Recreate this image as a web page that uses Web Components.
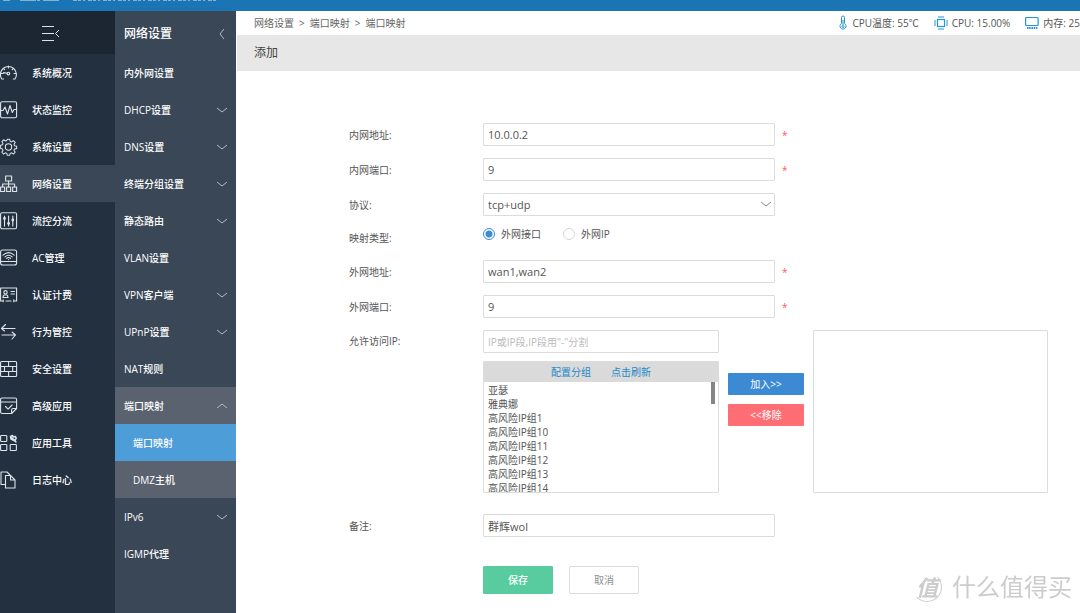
<!DOCTYPE html>
<html lang="zh-CN">
<head>
<meta charset="utf-8">
<title>端口映射</title>
<style>
html, body { margin: 0; }
body {
  font-family: "Open Sans", "Noto Sans CJK SC", sans-serif;
  font-size: 10px; line-height: 14px; color: #555; background: #fff;
  overflow-x: hidden;
}
</style>
</head>
<body>
<router-app></router-app>
<script>
const base = `
  *, *::before, *::after { box-sizing: border-box; }
  a { color: inherit; text-decoration: none; }
  button, input, select { font: inherit; color: inherit; margin: 0; }
  svg { display: block; flex: none; }
`;
function define(name, css, html) {
  customElements.define(name, class extends HTMLElement {
    connectedCallback() {
      if (this.shadowRoot) return;
      const root = this.attachShadow({ mode: "open" });
      const t = document.createElement("template");
      t.innerHTML = `<style>${base}${css}</style>` + (typeof html === "function" ? html(this) : html);
      root.append(t.content.cloneNode(true));
    }
  });
}

const stroke = (body, w = 18) => `<svg width="${w}" height="${w}" viewBox="0 0 ${w} ${w}" fill="none" stroke="currentColor" stroke-width="1.1" stroke-linecap="round" stroke-linejoin="round" aria-hidden="true">${body}</svg>`;
const icons = {
  gauge: `<path d="M3.500 15H1.800A8 8 0 1 1 15 15H13.300M8.400 2V4M3.300 4.300l1.300 1.300M13.500 4.300l-1.300 1.300M1 9.500h2M14 9.500h2M3.500 8.600L7 9.300"/><circle cx="8.400" cy="9.600" r="1.300"/>`,
  pulse: `<rect x=".6" y=".8" width="16" height="16" rx="1.5"/><path d="M.6 9.500H3L5 6l2.500 7L10 4.500l2.300 7L14 8.500h2.600"/>`,
  gear: `<circle cx="8.5" cy="9" r="3.2"/><path d="M7.2 1h2.6l.5 2.3 1.5.6 2-1.3 1.9 1.9-1.3 2 .6 1.5 2.3.5v2.6l-2.3.4-.6 1.5 1.3 2-1.9 1.9-2-1.3-1.5.6-.5 2H7.2l-.5-2-1.5-.6-2 1.3-1.9-1.9 1.3-2-.6-1.5-2-.4V7.500l2-.5.6-1.5-1.3-2 1.9-1.9 2 1.3 1.5-.6z" transform="translate(.6 .3) scale(.93)"/>`,
  net: `<rect x="5.6" y="1" width="6" height="5"/><rect x=".6" y="12" width="4" height="4.5"/><rect x="6.6" y="12" width="4" height="4.5"/><rect x="12.6" y="12" width="4" height="4.5"/><path d="M8.6 6v6M2.6 12V9h12v3"/>`,
  sliders: `<rect x=".6" y=".8" width="16" height="16" rx="1.5"/><path d="M4.5 4v10M8.6 4v10M12.8 4v10"/><g fill="currentColor" stroke="none"><circle cx="4.5" cy="6.5" r="1.4"/><circle cx="8.6" cy="11.5" r="1.4"/><circle cx="12.8" cy="8" r="1.4"/></g>`,
  wifi: `<rect x=".6" y="1" width="16" height="15" rx="2"/><path d="M.8 12.5h15.6M3 6.2Q8.6 1 14.2 6.2M5 7.8Q8.6 4.8 12.2 7.8M6.7 9.3q1.9-1.5 3.8 0M8.6 10.5v.1"/>`,
  card: `<path d="M3 15H.6V2h16v13H14M6 15h5M3.2 13.8v2M13.8 13.8v2M11 5.5h3.5M11 8h3.5M3 11.5q0-2.8 2.5-2.8T8 11.5z"/><circle cx="5.5" cy="6.3" r="1.7"/>`,
  arrows: `<path d="M15 5.5H1.5L5.500 1.5M1.5 5.500l3 2.500M2 12h13.500l-3.500-3M15.500 12l-3.500 4"/>`,
  wall: `<rect x=".6" y="1.5" width="16" height="15" rx="1"/><path d="M.6 6.500h16M.6 11.500h16M8.600 1.500v5M4.500 6.500v5M12.700 6.500v5M8.600 11.500v5"/>`,
  note: `<path d="M16.600 11.500V2.500q0-1.500-1.500-1.500H2.100Q.6 1 .6 2.500v12.500q0 1.500 1.500 1.500h9.500zM.6 5h16M11.600 16.500v-3.500q0-1.500 1.500-1.500h3.500M5.500 9.500l2.600 2.700 4-4.200"/>`,
  tools: `<rect x=".6" y="1.5" width="6.2" height="6" rx=".8"/><rect x=".6" y="10.500" width="6.200" height="6" rx=".8"/><rect x="10.200" y="10.500" width="6.200" height="6" rx=".8"/><path d="M12.500 1.500l-2 1 .5 2.500 2 1 3 2M12.500 1.500l1 1.500 2-.5.7 2-1.700 2M11.500 3.500l4 3.500" stroke-width="1.500"/>`,
  docs: `<path d="M5 13.500H1V1h6l3 3M5.500 4.500h5l4.500 4.500v8H5.500zM10.500 4.500V9H15"/>`
};

const chevron = (dir, w = 12) => {
  const d = { down: "M1 4l5 4 5-4", up: "M1 8l5-4 5 4", left: "M8 1L4 6l4 5" }[dir];
  return `<svg width="${w}" height="${w}" viewBox="0 0 12 12" fill="none" stroke="currentColor" aria-hidden="true"><path d="${d}"/></svg>`;
};

define("router-app", `
  :host { display: grid; grid-template: 11px auto / 115px 121px minmax(0, 1fr); min-height: 100vh; }
  top-strip { grid-column: 1 / -1; }
`, `
  <top-strip></top-strip>
  <main-nav></main-nav>
  <sub-nav></sub-nav>
  <main-page></main-page>
`);

define("top-strip", `
  :host { display: block; background: #1b74b4; overflow: hidden; }
  svg { opacity: .45; }
`, `<svg width="220" height="1" aria-hidden="true"><path d="M3 .5h7M20 .5h20M43 .5h17" stroke="#fff" stroke-dasharray="16 1"/><path d="M73 .5h143" stroke="#fff" stroke-dasharray="4 1 3 2 2 3"/></svg>`);

define("main-nav", `
  :host { display: block; background: #223040; color: #fff; }
  button { display: grid; place-items: center; width: 100%; height: 43px; padding: 0 14px 0 0; border: 0; background: #1b2632; }
`, `
  <nav aria-label="主菜单">
    <button type="button" aria-label="收起菜单"><svg width="18" height="16" viewBox="0 0 18 16" fill="none" stroke="#dde1e5"><path d="M0 1.500h12M0 8.500h12M0 15.500h12M17 5l-3.500 3.500L17 12"/></svg></button>
    <nav-item icon="gauge">系统概况</nav-item>
    <nav-item icon="pulse">状态监控</nav-item>
    <nav-item icon="gear">系统设置</nav-item>
    <nav-item icon="net" active>网络设置</nav-item>
    <nav-item icon="sliders">流控分流</nav-item>
    <nav-item icon="wifi">AC管理</nav-item>
    <nav-item icon="card">认证计费</nav-item>
    <nav-item icon="arrows">行为管控</nav-item>
    <nav-item icon="wall">安全设置</nav-item>
    <nav-item icon="note">高级应用</nav-item>
    <nav-item icon="tools">应用工具</nav-item>
    <nav-item icon="docs">日志中心</nav-item>
  </nav>
`);

define("nav-item", `
  :host { display: block; }
  :host([active]) { background: #3a4757; }
  a { display: flex; align-items: center; gap: 14px; height: 37px; font-weight: 500; }
  svg { color: #dfe4e8; }
`, el => `<a href="#">${stroke(icons[el.getAttribute("icon")])}<span><slot></slot></span></a>`);

define("sub-nav", `
  :host { display: block; background: #3a4757; color: #fff; }
  header { display: flex; align-items: center; justify-content: space-between; height: 43px; padding: 2px 8px 0 9px; color: #b4bbc3; }
  h2 { margin: 0; font-size: 12px; font-weight: 500; color: #fff; }
`, `
  <header><h2>网络设置</h2>${chevron("left")}</header>
  <nav aria-label="网络设置">
    <sub-item>内外网设置</sub-item>
    <sub-item chevron="down">DHCP设置</sub-item>
    <sub-item chevron="down">DNS设置</sub-item>
    <sub-item chevron="down">终端分组设置</sub-item>
    <sub-item chevron="down">静态路由</sub-item>
    <sub-item>VLAN设置</sub-item>
    <sub-item chevron="down">VPN客户端</sub-item>
    <sub-item chevron="down">UPnP设置</sub-item>
    <sub-item>NAT规则</sub-item>
    <sub-item chevron="up" open>端口映射</sub-item>
    <sub-item child active>端口映射</sub-item>
    <sub-item child>DMZ主机</sub-item>
    <sub-item chevron="down">IPv6</sub-item>
    <sub-item>IGMP代理</sub-item>
  </nav>
`);

define("sub-item", `
  :host { display: block; }
  :host([open]), :host([child]) { background: #59626e; }
  :host([active]) { background: #4d9dd8; }
  a { display: flex; align-items: center; justify-content: space-between; height: 37px; padding: 0 8px 0 9px; font-weight: 500; }
  :host([child]) a { padding-left: 18px; }
  svg { color: #b4bbc3; }
`, el => `<a href="#"><span><slot></slot></span>${el.hasAttribute("chevron") ? chevron(el.getAttribute("chevron")) : ""}</a>`);

define("main-page", `
  :host { display: block; padding-left: 1px; }
  .bar { display: flex; align-items: center; justify-content: space-between; height: 24px; overflow: hidden; }
  h1 { display: flex; align-items: center; margin: 0; height: 36px; padding: 0 17px; background: #e7e7e7; font-size: 12px; font-weight: 400; color: #444; }
  watermark-logo { position: fixed; right: 8px; bottom: 8px; }
`, `
  <div class="bar"><crumb-trail></crumb-trail><status-list></status-list></div>
  <h1>添加</h1>
  <mapping-form></mapping-form>
  <watermark-logo></watermark-logo>
`);

define("crumb-trail", `
  :host { display: block; padding-left: 17px; }
  nav { display: flex; gap: 5px; color: #666; white-space: nowrap; }
`, `<nav aria-label="位置"><a href="#">网络设置</a><span>&gt;</span><a href="#">端口映射</a><span>&gt;</span><a href="#">端口映射</a></nav>`);

define("status-list", `
  :host { display: flex; gap: 15px; color: #555; white-space: nowrap; }
  span { display: flex; align-items: center; gap: 4px; }
  svg { color: #2196d3; }
`, `
  <span><svg width="10" height="16" viewBox="0 0 10 16" fill="none" stroke="currentColor"><path d="M3.500 8.500V2.500a1.500 1.500 0 0 1 3 0v6a3 3 0 1 1-3 0z"/><path d="M5 5v5"/><circle cx="5" cy="11.500" r="1"/></svg>CPU温度: 55℃</span>
  <span><svg width="14" height="16" viewBox="0 0 14 16" fill="none" stroke="currentColor"><rect x="3.500" y="4.500" width="7" height="7" stroke-width="1.200"/><path d="M5 1v2M7 1v2M9 1v2M5 13v2M7 13v2M9 13v2M0 6h2M0 8h2M0 10h2M12 6h2M12 8h2M12 10h2"/></svg>CPU: 15.00%</span>
  <span><svg width="14" height="16" viewBox="0 0 14 16" fill="none" stroke="currentColor"><rect x=".6" y="2.500" width="12.500" height="8" rx="1" stroke-width="1.200"/><path d="M2 13h10.500" stroke-width="2" stroke-dasharray="1.500 .7"/></svg>内存: 25</span>
`);

const fieldCss = `
  :host { display: grid; grid-template-columns: 134px minmax(0, 1fr); align-items: center; min-height: 23px; }
  .control { display: flex; align-items: center; gap: 7px; }
  input, select { width: 292px; height: 23px; padding: 0 4px; border: 1px solid #dcdcdc; border-radius: 1px; background: #fff; outline: 0; font-size: 11px; color: #555; }
  .req { color: #ff5a5f; font-size: 10px; line-height: 14px; }
`;

define("text-field", fieldCss, el => `
  <label for="f">${el.getAttribute("label")}</label>
  <div class="control"><input id="f" type="text" value="${el.getAttribute("value")}">${el.hasAttribute("required") ? '<span class="req">*</span>' : ""}</div>
`);

define("select-field", fieldCss + `
  .box { position: relative; display: flex; }
  select { appearance: none; }
  svg { position: absolute; right: 3px; top: 5px; color: #888; pointer-events: none; }
`, el => `
  <label for="f">${el.getAttribute("label")}</label>
  <div class="control"><div class="box"><select id="f"><option>tcp+udp</option></select>${chevron("down")}</div></div>
`);

define("radio-field", `
  :host { display: block; }
  fieldset { display: grid; grid-template-columns: 134px minmax(0, 1fr); height: 20px; margin: 0; padding: 0; border: 0; }
  .title { line-height: 20px; }
  .control { display: flex; gap: 22px; height: 12px; align-items: center; }
  label { display: flex; align-items: center; gap: 6px; }
  input { appearance: none; width: 12px; height: 12px; border: 1px solid #d5d5d5; border-radius: 50%; background: #fff; }
  input:checked { border-color: #3c8bd6; background: radial-gradient(circle, #3c8bd6 3px, #fff 4px); }
`, el => `
  <fieldset aria-labelledby="t"><span id="t" class="title">${el.getAttribute("label")}</span>
  <div class="control">
    <label><input type="radio" name="kind" checked>外网接口</label>
    <label><input type="radio" name="kind">外网IP</label>
  </div></fieldset>
`);

define("group-picker", `
  :host { display: grid; grid-template-columns: 134px 236px 85px 235px; }
  .title { line-height: 23px; }
  .left { display: flex; flex-direction: column; gap: 8px; }
  input { width: 100%; height: 23px; padding: 0 4px; border: 1px solid #dcdcdc; border-radius: 1px; outline: 0; }
  input::placeholder { color: #bbb; opacity: 1; }
  .list { position: relative; border: 1px solid #dcdcdc; border-radius: 1px; height: 132px; overflow: hidden; }
  .links { display: flex; justify-content: center; gap: 20px; height: 20px; align-items: center; background: #dadada; color: #2389c9; }
  .list select { display: block; width: 100%; height: 110px; padding: 0; border: 0; outline: 0; background: #fff; overflow: hidden; color: #555; }
  option { min-height: 14px; height: 14px; line-height: 14px; padding: 0 4px; }
  .thumb { position: absolute; right: 3px; top: 20px; width: 4px; height: 22px; background: #858585; }
  .moves { display: flex; flex-direction: column; gap: 9px; padding: 43px 0 0 9px; }
  button { height: 22px; padding: 0; border: 0; border-radius: 1px; color: #fff; background: #3c8ad3; }
  button.remove { background: #ff6e74; }
  .target { width: 235px; height: 163px; margin-left: 9px; border: 1px solid #dcdcdc; border-radius: 1px; background: #fff; }
`, `
  <label class="title" for="ip">允许访问IP:</label>
  <div class="left">
    <input id="ip" type="text" placeholder='IP或IP段,IP段用"-"分割'>
    <div class="list">
      <div class="links"><a href="#">配置分组</a><a href="#">点击刷新</a></div>
      <select multiple size="8" aria-label="分组">
        <option>亚瑟</option><option>雅典娜</option><option>高风险IP组1</option><option>高风险IP组10</option>
        <option>高风险IP组11</option><option>高风险IP组12</option><option>高风险IP组13</option><option>高风险IP组14</option>
      </select>
      <span class="thumb"></span>
    </div>
  </div>
  <div class="moves"><button type="button">加入&gt;&gt;</button><button type="button" class="remove">&lt;&lt;移除</button></div>
  <select class="target" multiple aria-label="已选分组"></select>
`);

define("mapping-form", `
  :host { display: block; padding: 52px 32px 20px 112px; }
  form { display: flex; flex-direction: column; gap: 12px; }
  text-field.note { margin-top: 9px; }
  .actions { display: flex; gap: 16px; margin: 17px 0 0 134px; }
  button { width: 70px; height: 28px; padding: 0; border: 1px solid #dcdcdc; border-radius: 1px; background: #fff; color: #8a8f96; }
  .save { border-color: #58cb9f; background: #58cb9f; color: #fff; font-weight: 500; }
`, `
  <form>
    <text-field label="内网地址:" value="10.0.0.2" required></text-field>
    <text-field label="内网端口:" value="9" required></text-field>
    <select-field label="协议:"></select-field>
    <radio-field label="映射类型:"></radio-field>
    <text-field label="外网地址:" value="wan1,wan2" required></text-field>
    <text-field label="外网端口:" value="9" required></text-field>
    <group-picker></group-picker>
    <text-field class="note" label="备注:" value="群辉wol"></text-field>
    <div class="actions"><button type="button" class="save">保存</button><button type="button">取消</button></div>
  </form>
`);

define("watermark-logo", `
  :host { display: flex; align-items: center; gap: 10px; color: #ccc; pointer-events: none; }
  .mark { display: grid; place-items: center; width: 30px; height: 30px; border: 1px solid #ccc; border-left-color: transparent; border-top-color: transparent; border-radius: 50%; font-size: 22px; line-height: 28px; font-weight: 700; font-style: italic; }
  .name { font-size: 24px; line-height: 36px; }
`, `<span class="mark">值</span><span class="name">什么值得买</span>`);
</script>
</body>
</html>
